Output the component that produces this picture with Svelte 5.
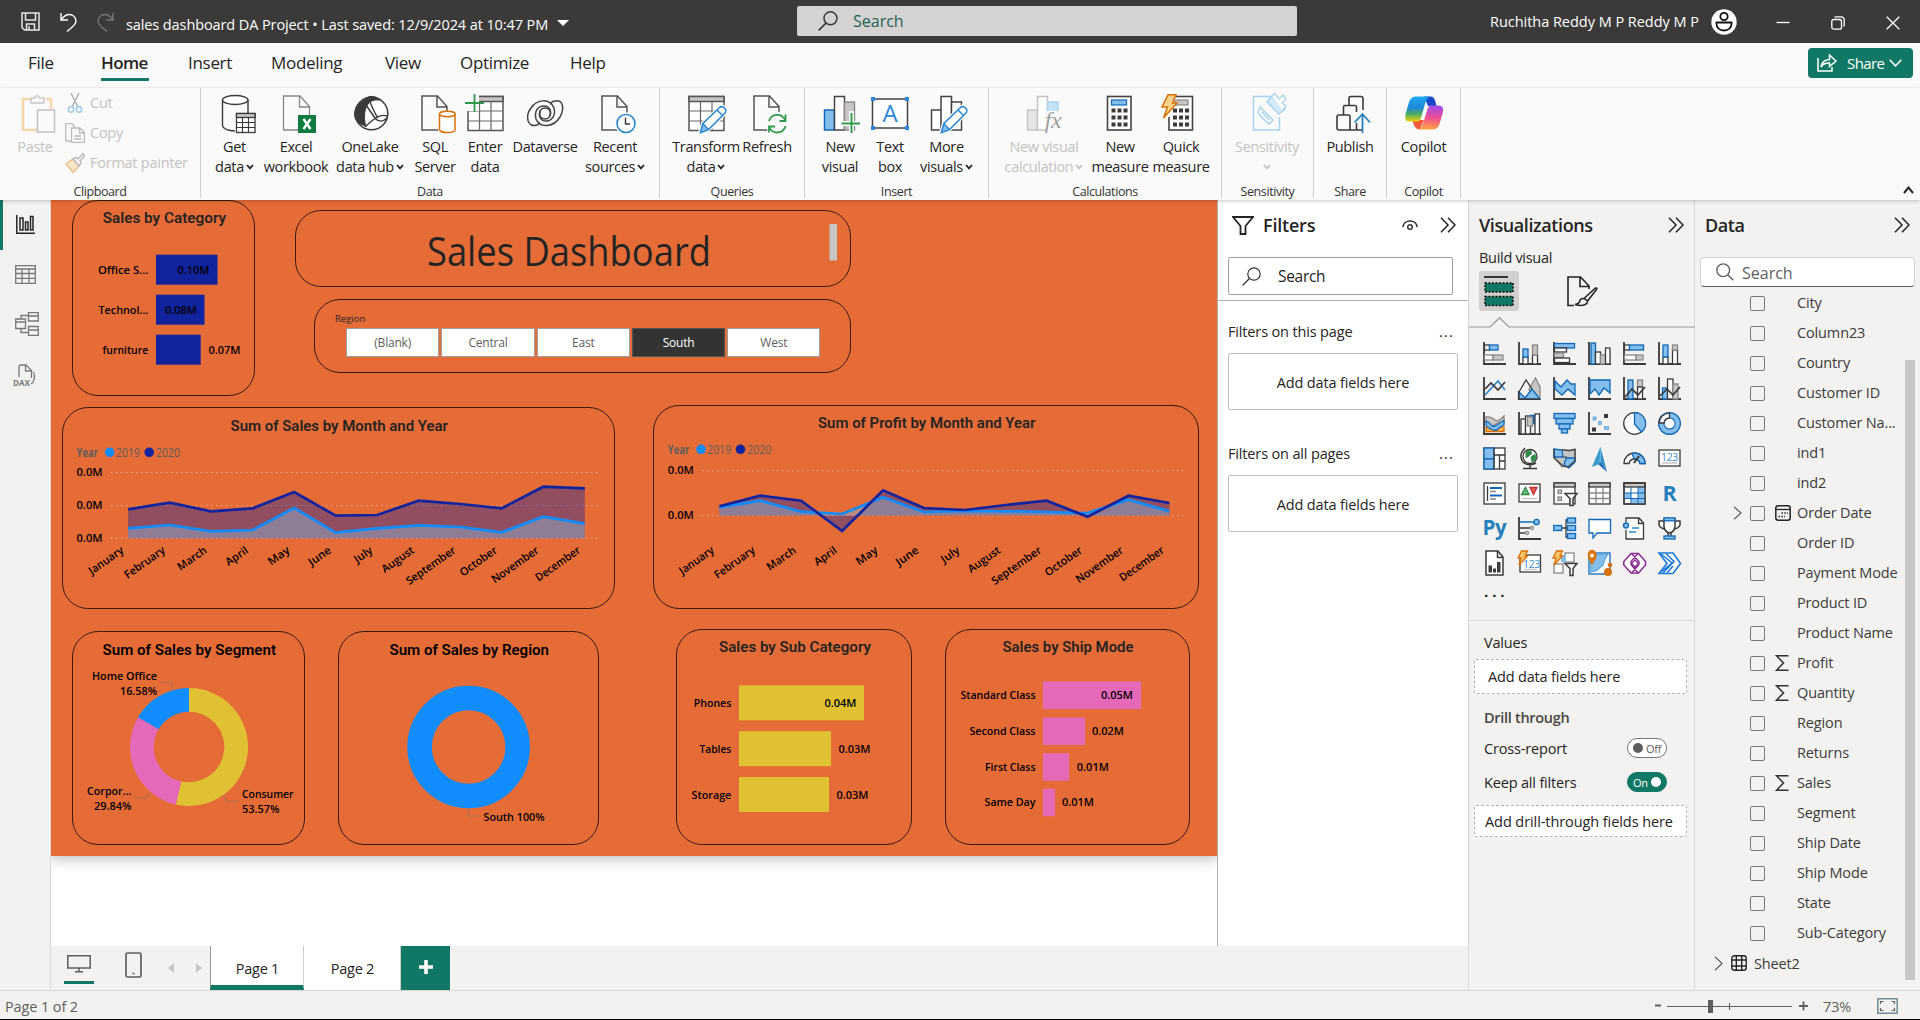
<script>
  const K = '#3b3a39', B = '#1068b8', L = '#83beec', G = '#8a8886', F = '#c8c6c4';
  const r = (x, y, w, h, fill = '#fff', stroke = K, sw = 1.3) =>
    `<rect x="${x}" y="${y}" width="${w}" height="${h}" fill="${fill}" stroke="${stroke}" stroke-width="${sw}"/>`;
  const p = (d, stroke = K, fill = 'none', sw = 1.3) =>
    `<path d="${d}" fill="${fill}" stroke="${stroke}" stroke-width="${sw}"/>`;
  const c = (x, y, rad, stroke = K, fill = 'none', sw = 1.3) =>
    `<circle cx="${x}" cy="${y}" r="${rad}" fill="${fill}" stroke="${stroke}" stroke-width="${sw}"/>`;
  const t = (x, y, s, size, fill, extra = '') =>
    `<text x="${x}" y="${y}" font-size="${size}" fill="${fill}" text-anchor="middle" ${extra}>${s}</text>`;
  const page = p('M7 2H22.500L32 12.500V36H7Z M22 2V13H32', '#555', '#fafafa', 1.5);
  const pencil =
    p('M14 39L17 29.500L33.500 13.500Q36 11.500 38.500 14Q41 16.500 39 19L22.500 35.500Z', '#fafafa', '#fafafa', 4) +
    p('M14.500 38.500L17 29.500L33.500 13.500Q36 11.500 38.500 14Q41 16.500 39 19L22.500 35.500Z M31 16L36.500 21.500', '#2b88d0', '#fff', 1.5) +
    p('M14.500 38.500L17 29.500L22.500 35.500Z', '#2b88d0', '#83beec', 1.3);
  const table = r(3, 2.500, 35, 34, '#fff', '#555', 1.5) + r(3, 2.500, 35, 5, F, '#555', 1.5) + p('M3 17H38M3 27H38M14.500 7.500V36M26 7.500V36', '#666', 'none', 1.2);
  const calc = (x) =>
    r(x, 2.500, 23.500, 33.500, '#fff', '#444', 1.6) +
    [0, 1, 2].map((i) => [0, 1, 2].map((j) => `<rect x="${x + 4 + j * 6}" y="${14.500 + i * 7}" width="4" height="4" fill="#3b3a39"/>`).join('')).join('');
  const bolt = p('M7 0.700H15L11.500 9H16L2.500 24L6.500 13H1Z', '#d8720a', '#fbd38a', 1.5);

  const ic = {
    get: p('M7.500 6V32Q9 36.500 20 37M33 6V19', '#3b3a39', 'none', 1.4) +
      `<ellipse cx="20.200" cy="6" rx="12.800" ry="4.500" fill="#fff" stroke="#3b3a39" stroke-width="1.400"/>` +
      r(21.500, 19.500, 18.500, 19) + r(21.500, 19.500, 18.500, 4, F) + p('M21.500 28.500H40M21.500 33.500H40M27.500 23.500V38M33.500 23.500V38', K, 'none', 1.1),
    excel: p('M7.500 2H24L33.500 12.500V36H7.500Z M23.500 2V13H33.500', '#888', '#fafafa', 1.3) + r(22, 21, 18, 18, '#107c41', '#107c41', 0) +
      p('M27.500 25L34.500 35M34.500 25L27.500 35', '#fff', 'none', 2.4),
    onelake: c(21.500, 19.500, 16.300, '#3b3a39', '#fff', 1.5) +
      p('M12 7.500Q20-2 31 6Q24 5 19.500 8Q12 16 15.500 32Q4 29 4.500 19Q6 11 12 7.500Z', '#3b3a39', '#3b3a39', 1) +
      p('M16 11L25 24M20 8Q25 20 28 24M15 33Q20 28 25 24.500Q31 20 37.500 22M25 24.500Q31 30 37 24', '#3b3a39', 'none', 1.4),
    sql: page + r(23, 19, 18, 18, '#fafafa', '#fafafa', 0) + p('M24.500 20V36Q26 38.500 32.500 38.500Q39 38.500 40 36V20', '#d8720a', '#fff', 1.5) +
      `<ellipse cx="32.300" cy="20" rx="7.800" ry="2.700" fill="#fff" stroke="#d8720a" stroke-width="1.500"/>`,
    enter: table + r(0, 0, 14, 17, '#fafafa', '#fafafa', 0) + p('M9.500 0V18M0 9H19', '#2f9a4b', 'none', 1.8),
    dataverse: p('M12 31C2 34 0 22 6 14C12 5 25 4 29 14C31 21 27 27 21 27C15 27 13 21 15.500 17', '#444', 'none', 1.5) +
      p('M28 7.500C38 4 40 14 35 23C29 33 15 35 11 25C9 17 13 12 19 12C25 12 27 18 24.500 22M12 31C14 30 14.500 29 14 28M28 7.500C26 8.500 25.500 9.500 26 10.500', '#444', 'none', 1.5) + c(20, 19.500, 5.500, '#444', 'none', 1.4),
    recent: page + c(31, 29.500, 10.500, '#fafafa', '#fafafa') + c(31, 29.500, 9, '#2b88c8', '#fff', 1.6) + p('M30.500 23.500V30H35', K, 'none', 1.4),
    transform: table + pencil,
    refresh: page + c(30, 29.500, 11, '#fafafa', '#fafafa') + p('M22 27A8.500 8.500 0 0 1 38 26M38.500 20.500V27H32.500M38.500 32A8.500 8.500 0 0 1 22.500 33.500M22 38.500V32.500H28', '#2f9a4b', 'none', 1.8),
    visual: r(4.500, 16, 10, 20, L, B, 1.5) + r(14.500, 2.500, 10, 33.500, '#fff', '#444', 1.5) + r(24.500, 8, 10, 28, F, G, 1.4) +
      p('M31.500 17V41M19.500 29.500H42', '#fafafa', 'none', 5) + p('M31.500 19V39M21.500 29.500H40', '#2f9a4b', 'none', 1.9),
    textbox: r(2.500, 5, 35, 29, '#fff', '#444', 1.5) +
      [[1, 3], [35, 3], [1, 32], [35, 32]].map(([x, y]) => r(x, y, 4, 4, '#2b88d8', '#2b88d8', 0)).join('') + t(20, 28, 'A', 24, '#2b88d8'),
    more: r(4.500, 16, 10, 20, '#fff', '#444', 1.5) + r(14, 2.500, 10.500, 33.500, '#fff', '#444', 1.5) + r(24.500, 8, 10, 28, '#fff', '#444', 1.5) + pencil,
    viscalc: r(3.500, 16, 10, 20, '#e6e5e4', '#c4c4c4', 1.4) + r(13.500, 2.500, 10, 33.500, '#fff', '#c0c0c0', 1.4) + r(23.500, 8, 10.500, 14, '#c7e3f7', '#a9d2ef', 1.4) +
      r(23, 17, 17, 23, '#fafafa', '#fafafa', 0) + t(29, 34, 'fx', 24, '#a0a0a0', 'font-family="Liberation Serif" font-style="italic"'),
    measure: calc(7.500) + r(11.500, 6, 15, 5, L, B, 1.2),
    quick: calc(8) + r(14, 6, 13, 5, F, G, 1.2) + r(0, 1, 12, 22, '#fafafa', '#fafafa', 0) + bolt,
    sens: p('M24 2.500H6.500V36H32.500V23', '#a8d3ee', 'none', 1.5) + p('M13 13L26 26L22 30Q20 29 11 19Z M14.500 17.500L22.500 26', '#a8d3ee', '#fff', 1.5) +
      p('M20 8L25 2L38 15L32 20Z', '#a8d3ee', '#d6ebf8', 1.5) + p('M25 2L28-.5L32 5L36 1L39 5L35 9L39 12L36 16', '#a8d3ee', '#fff', 1.3),
    publish: p('M20 36V22Q20 21 18.500 21H9Q7 21 7 23V34Q7 36 9 36H32M13.500 21V13Q13.500 11.500 15 11.500H25Q26.500 11.500 26.500 13V18M19 11V4Q19 2.500 20.500 2.500H31Q33 2.500 33 4.500V16M26.500 29V36', '#3b3a39', 'none', 1.6) +
      p('M32.500 39V21M24.500 28.500L32.500 20L40 28.500', '#2580bb', 'none', 1.8),
    copilot: `<defs><linearGradient id="ca" x1="0" y1="0" x2="0" y2="1"><stop offset="0" stop-color="#1fa8f2"/><stop offset=".45" stop-color="#1d86d8"/><stop offset=".7" stop-color="#4cae62"/><stop offset="1" stop-color="#f2d10c"/></linearGradient>
      <linearGradient id="cb" x1=".4" y1="0" x2=".3" y2="1"><stop offset="0" stop-color="#a34be8"/><stop offset=".5" stop-color="#ee5090"/><stop offset="1" stop-color="#ffa63c"/></linearGradient></defs>
      <path d="M20 2.500H27Q30 2.500 31.500 8L32.500 12H24Z" fill="#1a48c9"/><path d="M8 26H20L16 35Q12 36 10 31Z" fill="#ee5a3b"/>
      <path d="M12 2.500H26Q22.500 4 21 10L17 24Q16 27.500 12 27.500H5Q0 27.500 1.500 20L5 8Q7 2.500 12 2.500Z" fill="url(#ca)"/>
      <path d="M28 11.500H35Q40 11.500 39 18L35.500 30Q34 35.500 28 35.500H14Q18 34 19.500 28L23.500 15Q24.500 11.500 28 11.500Z" fill="url(#cb)"/>`,
    paste: p('M14 5H4V36H18M27 5H32V15', '#f5d7ab', 'none', 2.5) + p('M12 9V4H16Q18-1 20.500 4H25V9Z', '#c8c8c8', '#fafafa', 1.5) + r(18.500, 16, 17, 22, '#fafafa', '#c0c0c0', 1.5)
  };

  const groups = [
    { name: 'Data', width: 459, items: [
      ['get', 'Get', 'data', 1, 67], ['excel', 'Excel', 'workbook', 0, 56], ['onelake', 'OneLake', 'data hub', 1, 92], ['sql', 'SQL', 'Server', 0, 38],
      ['enter', 'Enter', 'data', 0, 62], ['dataverse', 'Dataverse', '', 0, 58], ['recent', 'Recent', 'sources', 1, 82]] },
    { name: 'Queries', width: 145, items: [['transform', 'Transform', 'data', 1, 92], ['refresh', 'Refresh', '', 0, 30]] },
    { name: 'Insert', width: 184, items: [['visual', 'New', 'visual', 0, 70], ['textbox', 'Text', 'box', 0, 30], ['more', 'More', 'visuals', 1, 83]] },
    { name: 'Calculations', width: 233, items: [['viscalc', 'New visual', 'calculation', 1, 110, 1], ['measure', 'New', 'measure', 0, 42], ['quick', 'Quick', 'measure', 0, 80]] },
    { name: 'Sensitivity', width: 92, items: [['sens', 'Sensitivity', '', 1, 90, 1]] },
    { name: 'Share', width: 73, items: [['publish', 'Publish', '', 0, 72]] },
    { name: 'Copilot', width: 74, items: [['copilot', 'Copilot', '', 0, 73]] }
  ];

  const axis = p('M1 0V22H23', K, 'none', 1.8);
  const viz = [
    axis + r(1.500, 3, 5, 5) + r(6.500, 3, 8.500, 5, L, B) + r(1.500, 13, 8.500, 5, '#fff', G) + r(10, 13, 10, 5, F, G),
    axis + r(5, 15, 5, 7) + r(5, 7, 5, 8, L, B) + r(14.500, 13, 5, 9) + r(14.500, 3, 5, 10, F, G),
    axis + r(1.500, 1.500, 20, 4.500, L, B) + r(1.500, 6, 12, 4) + r(1.500, 11, 9, 4.500, F, G) + r(1.500, 16, 15, 4.500),
    axis + r(3, 1, 4.500, 21, L, B) + r(7.500, 10, 5, 12) + r(12.500, 13, 5, 9, F, G) + r(17.500, 6, 4.500, 16),
    axis + r(1.500, 3, 5, 5) + r(6.500, 3, 14, 5, L, B) + r(1.500, 13, 11.500, 5, '#fff', G) + r(13, 13, 7, 5, F, G),
    axis + r(5, 15, 5, 7) + r(5, 3, 5, 12, L, B) + r(14.500, 8, 5, 14) + r(14.500, 3, 5, 5, F, G),
    axis + p('M2 18L15 4L22 13', '#2b88c8', 'none', 1.7) + p('M2 12L8 6L15 13L22 5', K, 'none', 1.7),
    p('M11 12L17.500 1L22 10V22H14Z', G, F) + p('M1 15L8 3L14 12L7 22H1Z') + p('M1 15L7 21L14 12L22 22H1Z', B, L) + p('M.7 14V22.300H22', K, 'none', 1.600),
    axis + p('M2 4L8 10L14 3L18 7H22V18L15 12L9 18L2 12Z', B, L),
    axis + p('M2 3H22V16L16 11L11 18L7 12L2 17Z', B, L),
    axis + r(5, 3, 5, 19, L, B) + r(14.500, 3, 5, 7, F, G) + r(14.500, 10, 5, 12) + p('M2 20L9 12L15 18L22 10', K, 'none', 1.7),
    axis + r(4.500, 11, 5, 11, L, B) + r(9.500, 2, 5.500, 20) + r(15, 7, 5, 15, F, G) + p('M2 19L9 12L15 18L22 10', K, 'none', 1.7),
    p('M3 15H21V19.500H3Z', '#d8720a', '#f7b04d') + p('M3 5Q8 4 11.500 7.500T21 4V10Q16 9 12 12.500T3 10Z', G, F) + p('M3 9Q6 10 8 13T14 13T21 8.500V13Q17 14.500 15 17T8 17T3 13Z', B, L) + axis,
    axis + r(3, 7, 4.500, 15) + r(7.500, 4, 5, 18) + r(12, 3, 5, 9, '#1068b8', B, .5) + r(9.500, 5, 5, 9, F, G) + r(17, 2, 4.500, 20),
    r(1, 1.500, 21, 5, L, B) + r(3, 6.500, 17, 5.500, L, B) + r(6, 12, 11, 5, L, B) + r(8.500, 17, 6, 4, L, B),
    axis + r(5, 5, 3, 3, L, '#5fa8dc', .8) + r(16, 2, 4, 4, K, K, 0) + r(10.500, 9.500, 3, 3, L, '#5fa8dc', .8) + r(4, 15.500, 4, 4, K, K, 0) + r(16.500, 14.500, 4, 3, L, '#5fa8dc', .8),
    c(11.500, 11.500, 10.800, K, '#fff') + p('M11.500 .7A10.800 10.800 0 0 1 18.500 20L11.500 12Z', B, L),
    c(11.500, 11.500, 8.500, L, 'none', 5) + c(11.500, 11.500, 10.900, B, 'none', 1.2) + c(11.500, 11.500, 5.600, B, '#fff', 1.2) + p('M1 11Q2 2 11.500 .8V6Q6.500 6.500 6 11Z', K, '#fff'),
    r(1, 1, 21, 21) + r(1, 1, 10, 11, L, B) + r(1, 12, 10, 10, L, B) + p('M11 8H22M11 1V22M16.500 8V22M16.500 14H22'),
    c(12, 9.500, 7, K, '#fff') + p('M8 5L12 3L14 6L11 9L8 11ZM13 10L17 7L18 12L14 15Z', '#2f8a48', '#2f8a48', .8) + p('M7 1Q0 8 5 15Q10 20 18 16M12 18V21M5 21.500H19', K, 'none', 1.500),
    p('M1 3H22V13L17 18H13L9 20L1 10Z', G, F) + p('M1 2L9 3L10 10H1Z', B, L) + p('M13 11H22V15L16 21L11 18Z', B, L) + p('M1 2V11L10 19L15 20L22 14V2L16 4L9 2.500M10 10H14', K, 'none', 1.2),
    `<path d="M12.500 0L4 20L13 15Z" fill="#5fb6dd"/><path d="M12.500 0L19 25L13 15Z" fill="#2f8fc6"/><path d="M12.500 0L4 20L11 17Z" fill="#3a9ccb"/><path d="M13 15L19 25L10 17Z" fill="#1a69ad"/>`,
    p('M1 16.500A10.500 10.500 0 0 1 22 16.500H17Q16 12 11.500 12T6 16.500Z', K, '#fff') + p('M9 6.500A10.500 10.500 0 0 1 22 16.500H17Q16 12 11 11.500Z', B, L) + p('M16 9L11 16', K, K, 2),
    r(1, 3, 21, 16) + t(11.500, 13.500, '123', 10.500, '#3a8fd0') + p('M4 16H19', F, 'none', 1.5),
    r(1, 1, 21, 21) + p('M4.500 4V19', K) + p('M7 6H19M7 13.500H19', B, 'none', 1.8) + p('M7 9.500H13M7 17H13', G),
    r(1, 2, 21, 18) + p('M3.500 12.500L7.500 5.500L11 12.500Z', '#2f8a48', '#6cc27f') + p('M12 5.500H19L15.500 12.500Z', '#c4312f', '#e8605c') + p('M4 16.500H19', F, 'none', 1.5),
    r(1, 1, 21, 21) + r(1, 1, 21, 4, F, K) + r(5, 8, 3.500, 3.500, F, G) + r(5, 15, 3.500, 3.500, F, G) + p('M12 11.500H24L20 16.500V23.500H17V16.500Z', K, '#fff', 1.5),
    r(1, 1, 21, 21) + r(1, 1, 21, 4, F, K) + p('M1 11H22M1 16.500H22M8 5V22M15 5V22', G),
    r(1, 1, 21, 21) + r(15, 5, 7, 17, L, B, 0) + r(8, 16, 14, 6, L, B, 0) + r(1, 11, 7, 5.500, L, B, 0) + r(1, 1, 21, 4, F, K) + p('M1 11H22M1 16.500H22M8 5V22M15 5V22', B, 'none', 1) + p('M1 1H22V22H1Z'),
    t(11.500, 19, 'R', 21.500, '#2580bb', 'font-weight="700"'),
    t(11.500, 18, 'Py', 20.500, '#2580bb', 'font-weight="700"'),
    axis + p('M2 5H17', '#2b88c8', 'none', 1.8) + c(18.500, 5, 2.700, B, L) + p('M2 11H12M2 16H7', K) + c(14, 11, 1.500, G, '#fff') + c(9, 16, 1.500, G, '#fff'),
    p('M8 11H14M18 3H13V20H18', K) + r(.7, 8.500, 8, 5, L, B) + r(14.500, 1, 8, 5, L, B) + r(14.500, 8.500, 8, 5, L, B) + r(14.500, 16.500, 8, 5, L, B),
    p('M1 2.500H22.500V16H9L5 21V16H1Z', B, '#fff'),
    p('M3 5V1H16L20.500 6V22H3V13M15.500 1V6.500H20.500', K, '#fff') + c(3, 8.500, 2.500, B, L) + p('M9 11H16M6 15H13', '#2b88c8', 'none', 1.3),
    p('M6 2H17V10Q16 15 11.500 16Q7 15 6 10Z M6 4H1V8Q2 11 6.500 12M17 4H22V8Q21 11 16.500 12M10 16V19M13 16V19', K, '#fff', 1.500) + r(6, .8, 11, 3, L, B) + r(6, 19, 11, 3, L, B),
    p('M3 -1H15L20 5V23H3Z M14.500 -1V5.500H20', K, '#fff', 1.5) + r(5.500, 13.500, 3.500, 7, K, K, 0) + r(10, 16.500, 3, 4, K, K, 0) + r(14, 10, 3.500, 10.500, K, K, 0),
    r(2, 3, 20.500, 17) + t(13.500, 15.500, '123', 10.500, '#3a8fd0') + p('M6 17.500H19', F) + p('M3.500 -1H9.500L7 4H9.500L1 13L3 6H0Z', '#d8720a', '#fbc36a'),
    r(12, 1, 9, 9, '#fff', G) + r(1, 12, 9, 9, '#fff', G) + r(8, 3, 5, 7, L, L, 0) + p('M12 11.500H24L20 16.500V23.500H17V16.500Z', K, '#fff', 1.5) + p('M3.500 -1H9.500L7 4H9.500L1 13L3 6H0Z', '#d8720a', '#fbc36a'),
    r(1, 1, 21, 21, '#fff', B) + p('M2 10L10 2H20L17 7L15 13L8 19L2 20Z', '#5fa8dc', L) + p('M4 12L1 6Q-1 -1 4 -1.500Q9 -1 7.500 6Z', '#d8720a', '#e07a10') + c(4, 3.500, 1.200, '#fff', '#fff') + c(20, 20, 3.300, '#d8720a', '#d8720a') + c(22, 13, 1.700, '#d8720a', '#d8720a'),
    p('M8 1.500H15.500L22.500 9.500V13L15.500 21H8L.8 13V9.500Z', '#8a2f94', '#fff', 1.6) + p('M8.500 1.500L16 9.500V12.500L8.500 21M15 1.500L8 9.500V12.500L15 21M8.500 11.500L12 8L15.500 11.500L12 15Z', '#8a2f94', 'none', 1.4),
    p('M1 1H15L22.500 11.500L15 21.500H1L9 11.500Z', '#1a78d8', '#fff', 1.6) + p('M3 2L14 11L3 20M8 1.500L16 9.500L5 21M15 14L9 21', '#1a78d8', 'none', 1.500)
  ];

  const fields = [['City'], ['Column23'], ['Country'], ['Customer ID'], ['Customer Na...'], ['ind1'], ['ind2'], ['Order Date', 'date'], ['Order ID'], ['Payment Mode'], ['Product ID'],
    ['Product Name'], ['Profit', 'sum'], ['Quantity', 'sum'], ['Region'], ['Returns'], ['Sales', 'sum'], ['Segment'], ['Ship Date'], ['Ship Mode'], ['State'], ['Sub-Category']];
  const regions = ['(Blank)', 'Central', 'East', 'South', 'West'];
  const months = ['January', 'February', 'March', 'April', 'May', 'June', 'July', 'August', 'September', 'October', 'November', 'December'];
  const monthLen = [40, 47, 33, 25, 24, 25, 20, 37, 58, 43, 55, 52];

  const trends = [
    { title: 'Sum of Sales by Month and Year', box: '62 407 553 202', tx: 230.500, ty: 431.300, lx: 76.500, ly: 456.500, grid: [472.500, 505.500, 538.300], g0: 111, g1: 601, base: 538.300, x0: 128.100, dx: 41.520, mx: 123.500,
      a: [509.300, 502.700, 511.300, 508.300, 492, 515.700, 515, 500.700, 504, 508.300, 486.700, 488.300],
      b: [528.300, 525, 531.300, 530, 508, 532.700, 528.300, 525.300, 527, 532.300, 516.700, 523.700] },
    { title: 'Sum of Profit by Month and Year', box: '653 405 546 204', tx: 818, ty: 428.300, lx: 667.800, ly: 453.500, grid: [470.700, 515.600], g0: 702, g1: 1183, base: 515.600, x0: 719.400, dx: 40.910, mx: 714,
      a: [506.300, 495.700, 500.700, 531, 490.300, 508, 510, 505, 500.700, 516.700, 495.700, 503],
      b: [507.300, 500.700, 511.700, 514, 497.300, 512, 511, 511.300, 512, 513, 499.700, 511.300] }
  ];
  const line = (ch, ys) => ys.map((y, i) => `${(ch.x0 + ch.dx * i).toFixed(1)},${y}`).join(' ');
  const area = (ch, ys) => `${ch.x0},${ch.base} ${line(ch, ys)} ${ch.x0 + ch.dx * 11},${ch.base}`;

  // [label, label start, baseline, bar top, bar width, value, value start]
  const category = [['Office S...', 98, 274.300, 254.700, 61.500, '0.10M', 177.500], ['Technol...', 98.500, 314.300, 294.700, 48.500, '0.08M', 165], ['furniture', 102.500, 354.300, 334.700, 44.700, '0.07M', 208.500]];
  const sub = [['Phones', 693.800, 707, 685.300, 125, '0.04M', 824.500], ['Tables', 699.500, 752.500, 731.200, 92, '0.03M', 838.500], ['Storage', 691.500, 798.500, 777, 90, '0.03M', 836.500]];
  const ship = [['Standard Class', 960.500, 699, 681.500, 98, '0.05M', 1101], ['Second Class', 969.500, 735, 717.500, 42, '0.02M', 1092], ['First Class', 985, 771, 753.200, 26, '0.01M', 1076.800], ['Same Day', 984.500, 806, 788.700, 12, '0.01M', 1062]];

  function arc(cx, cy, R, q, a0, a1) {
    const pt = (rad, a) => `${(cx + rad * Math.sin((a * Math.PI) / 180)).toFixed(2)} ${(cy - rad * Math.cos((a * Math.PI) / 180)).toFixed(2)}`;
    const big = a1 - a0 > 180 ? 1 : 0;
    return `M${pt(R, a0)}A${R} ${R} 0 ${big} 1 ${pt(R, a1)}L${pt(q, a1)}A${q} ${q} 0 ${big} 0 ${pt(q, a0)}Z`;
  }
</script>

{#snippet svg(body, w, h, box)}
  <svg width={w} height={h} viewBox={box} overflow="visible">{@html body}</svg>
{/snippet}
{#snippet label(x, y, len, s, cls)}
  <text {x} {y} textLength={len} lengthAdjust="spacingAndGlyphs" class={cls}>{s}</text>
{/snippet}
{#snippet chevrons()}
  <svg width="16" height="16" viewBox="0 0 16 16"><path d="M1 .7L8 8L1 15.300M8 .7L15 8L8 15.300" fill="none" stroke="#252423" stroke-width="1.500" /></svg>
{/snippet}
{#snippet caret()}
  <svg class="caret" width="8" height="6" viewBox="0 0 8 6"><path d="M1 1L4 4.300L7 1" fill="none" stroke="currentColor" stroke-width="1.800" /></svg>
{/snippet}
{#snippet bars(rows, x, end, h, color)}
  {#each rows as b}
    <rect {x} y={b[3]} width={b[4]} height={h} fill={color} />
    {@render label(b[1], b[2], end - b[1], b[0], 'dl')}
    {@render label(b[6], b[2], 32, b[5], 'dl')}
  {/each}
{/snippet}

<div class="app">
  <header class="titlebar">
    <div class="quick">
      <svg width="19" height="19" viewBox="0 0 19 19"><path d="M1 1H18V18H3.500L1 15.500ZM4.500 1V8H14.500V1M5.500 18V12H13.500V18M8 14V18" fill="none" stroke="#e8e6e4" stroke-width="1.500" /></svg>
      <svg width="17" height="20" viewBox="0 0 17 20"><path d="M1 1V8H8M1.500 7.500Q6 1 12 3Q17 6 15.500 11Q14 14 7 19.500" fill="none" stroke="#fff" stroke-width="1.400" /></svg>
      <svg width="17" height="20" viewBox="0 0 17 20"><path d="M16 1V8H9M15.500 7.500Q11 1 5 3Q0 6 1.500 11Q3 14 10 19.500" fill="none" stroke="#777" stroke-width="1.400" /></svg>
    </div>
    <span class="doc">sales dashboard DA Project&nbsp;• Last saved: 12/9/2024 at 10:47 PM</span>
    <svg class="down" width="12" height="6" viewBox="0 0 12 6"><path d="M0 0H12L6 6Z" fill="#fff" /></svg>
    <div class="topsearch">
      <svg width="20" height="20" viewBox="0 0 20 20"><circle cx="12.500" cy="7.300" r="6.500" fill="none" stroke="#3b3a39" stroke-width="1.500" /><path d="M8 12L.7 19.300" stroke="#3b3a39" stroke-width="1.700" /></svg>
      <span>Search</span>
    </div>
    <span class="user">Ruchitha Reddy M P Reddy M P</span>
    <svg class="avatar" width="26" height="26" viewBox="0 0 26 26"><circle cx="13" cy="13" r="12.700" fill="#fff" /><circle cx="13" cy="7.500" r="3.700" fill="none" stroke="#111" stroke-width="1.800" /><path d="M5.500 13.500H20.500V15Q20 21.500 13 21.500Q6 21.500 5.500 15Z" fill="none" stroke="#111" stroke-width="1.800" /></svg>
    <div class="win">
      <svg width="14" height="14" viewBox="0 0 14 14"><path d="M.5 6.500H13.500" stroke="#fff" stroke-width="1.300" /></svg>
      <svg width="14" height="14" viewBox="0 0 14 14"><rect x=".8" y="3.500" width="9.700" height="9.700" rx="2" fill="none" stroke="#fff" stroke-width="1.300" /><path d="M3.500 1.200Q4 .8 5 .8H10Q13.200 .8 13.200 4V9Q13.200 10 12.500 10.500" fill="none" stroke="#fff" stroke-width="1.300" /></svg>
      <svg width="14" height="14" viewBox="0 0 14 14"><path d="M.7 .7L13.300 13.300M13.300 .7L.7 13.300" stroke="#fff" stroke-width="1.300" /></svg>
    </div>
  </header>

  <nav class="tabs">
    <span class="tab file">File</span><span class="tab home">Home</span><span class="tab insert">Insert</span><span class="tab modeling">Modeling</span>
    <span class="tab view">View</span><span class="tab optimize">Optimize</span><span class="tab help">Help</span>
    <button class="share">
      <svg width="20" height="18" viewBox="0 0 20 18"><path d="M1 4V17H15V13M4 13Q5 6 12.500 5.500V1L19 7L12.500 12.500V9Q7 8.500 4 13Z" fill="none" stroke="#fff" stroke-width="1.500" /></svg>
      <span>Share</span>
      <svg width="13" height="8" viewBox="0 0 13 8"><path d="M.7 .8L6.500 6.800L12.300 .8" fill="none" stroke="#fff" stroke-width="1.500" /></svg>
    </button>
  </nav>

  <section class="ribbon">
    <div class="group clip">
      <div class="cliprow">
        <div class="item off paste">{@render svg(ic.paste, 38, 40, '0 0 38 40')}<span>Paste</span></div>
        <div class="clipcol">
          <div><svg width="20" height="20" viewBox="0 0 20 20"><path d="M6 0L13 14M14 0L7 14" stroke="#aaa" stroke-width="1.300" /><circle cx="6" cy="16.500" r="2.700" fill="none" stroke="#9fcbe8" stroke-width="1.500" /><circle cx="14" cy="16.500" r="2.700" fill="none" stroke="#9fcbe8" stroke-width="1.500" /></svg>Cut</div>
          <div><svg width="20" height="20" viewBox="0 0 20 20"><path d="M6 18H.7V.7H7L10 4M6.500 5H15L19.300 9.500V19.300H6.500ZM14.500 5V10H19M9.500 13H16M9.500 16H16" fill="none" stroke="#bbb" stroke-width="1.300" /></svg>Copy</div>
          <div><svg width="20" height="20" viewBox="0 0 20 20"><path d="M1 11L8 6L14 13L8 19.500Z" fill="#fbe6c8" stroke="#ecc48e" stroke-width="1.500" /><path d="M8 6L11 4.500L13 6L18 .7L19.500 3L15 8L16 10L14 13Z" fill="#fafafa" stroke="#bbb" stroke-width="1.500" /></svg>Format painter</div>
        </div>
      </div>
      <span class="gname">Clipboard</span>
    </div>
    {#each groups as g}
      <div class="group" style:width="{g.width}px">
        <div class="items">
          {#each g.items as it}
            <div class="item" class:off={it[5]} style:width="{it[4]}px">
              {@render svg(ic[it[0]], 40, 40, '0 0 40 40')}
              <span>{it[1]}</span>
              <span class="second">{it[2]}{#if it[3]}{@render caret()}{/if}</span>
            </div>
          {/each}
        </div>
        <span class="gname">{g.name}</span>
      </div>
    {/each}
    <svg class="collapse" width="11" height="8" viewBox="0 0 11 8"><path d="M1 7L5.500 1.500L10 7" fill="none" stroke="#252423" stroke-width="2" /></svg>
  </section>

  <main class="body">
    <aside class="rail">
      <div class="railitem active"><svg width="19" height="19" viewBox="0 0 19 19"><path d="M.8 0V18.200H19M4 3H7V15H4ZM9.500 7H12V15H9.500ZM14.500 1.500H17V15H14.500Z" fill="none" stroke="#252423" stroke-width="1.500" /></svg></div>
      <div class="railitem"><svg width="21" height="19" viewBox="0 0 21 19"><path d="M.7 .7H20.300V18.300H.7ZM.7 4H20.300M.7 8.500H20.300M.7 13.300H20.300M7 4V18.300M14 4V18.300" fill="none" stroke="#7a7876" stroke-width="1.300" /></svg></div>
      <div class="railitem"><svg width="24" height="24" viewBox="0 0 24 24"><path d="M.7 7H10.500V16.500H.7ZM.7 10H10.500M13.500 .7H23.300V9H13.500ZM13.500 4H23.300M13.500 14.500H23.300V23.300H13.500ZM13.500 18H23.300M6 7V3.500H13.500M6 16.500V20.500H13.500" fill="none" stroke="#7a7876" stroke-width="1.300" /></svg></div>
      <div class="railitem"><svg class="dax" width="23" height="26" viewBox="0 0 23 26"><path d="M6 13V3Q6 1 8 1H13L18.500 6.500V14M12.500 1V7H18.500M20 8Q21.500 9 21.500 12Q21.500 18 18 20" fill="none" stroke="#7a7876" stroke-width="1.300" /><text x="0" y="21.500" font-size="9.500" textLength="17" lengthAdjust="spacingAndGlyphs" font-weight="700" fill="#7a7876">DAX</text></svg></div>
    </aside>

    <div class="work">
      <div class="upper">
        <div class="viewport">
          <div class="report">
            <div class="r1">
              <div class="card cat">
                <svg viewBox="72 200 182 196">
                  {@render label(102.700, 223.300, 123.500, 'Sales by Category', 'vt')}
                  {@render bars(category, 156, 148.300, 30, '#12239e')}
                </svg>
              </div>
              <div class="r1r">
                <div class="card head">
                  <svg viewBox="295 210 556 77">
                    {@render label(427, 266, 284, 'Sales Dashboard', 'big')}
                    <rect x="829.500" y="224" width="7.500" height="36.500" fill="#c8c6c4" />
                  </svg>
                </div>
                <div class="card slicer">
                  <span class="sname">Region</span>
                  <div class="chips">{#each regions as g}<span class="chip" class:on={g === 'South'}>{g}</span>{/each}</div>
                </div>
              </div>
            </div>
            <div class="r2">
              {#each trends as ch, k}
                <div class="card {k ? 'profit' : 'sales'}">
                  <svg viewBox={ch.box}>
                    {@render label(ch.tx, ch.ty, 217.500, ch.title, 'vt')}
                    {@render label(ch.lx, ch.ly, 21.500, 'Year', 'lg b')}
                    <circle cx={ch.lx + 33.200} cy={ch.ly - 4.200} r="4.800" fill="#118dff" />
                    {@render label(ch.lx + 39.500, ch.ly, 24, '2019', 'lg')}
                    <circle cx={ch.lx + 72.700} cy={ch.ly - 4.200} r="4.800" fill="#12239e" />
                    {@render label(ch.lx + 79.500, ch.ly, 24, '2020', 'lg')}
                    {#each ch.grid as y}
                      <line x1={ch.g0} x2={ch.g1} y1={y} y2={y} stroke="#efa98a" stroke-width="1" stroke-dasharray="1.500 3.500" />
                      {@render label(ch.lx, y + 3.300, 26, '0.0M', 'dl')}
                    {/each}
                    <polygon points={area(ch, ch.a)} fill="#12239e" fill-opacity=".4" />
                    <polygon points={area(ch, ch.b)} fill="#8eabcb" fill-opacity=".5" />
                    <polyline points={line(ch, ch.b)} fill="none" stroke="#118dff" stroke-width="2.700" />
                    <polyline points={line(ch, ch.a)} fill="none" stroke="#12239e" stroke-width="2.700" />
                    {#each months as m, i}
                      <text x="0" y="0" text-anchor="end" textLength={monthLen[i]} lengthAdjust="spacingAndGlyphs" class="mo" transform="translate({ch.mx + ch.dx * i + 1} 552) rotate(-35)">{m}</text>
                    {/each}
                  </svg>
                </div>
              {/each}
            </div>
            <div class="r3">
              <div class="card seg">
                <svg viewBox="72 631 233 214">
                  {@render label(102.500, 655.300, 173.500, 'Sum of Sales by Segment', 'vt k')}
                  <path d={arc(189, 747, 59, 35.300, 0, 192.850)} fill="#dfc133" />
                  <path d={arc(189, 747, 59, 35.300, 192.850, 300.300)} fill="#e669b9" />
                  <path d={arc(189, 747, 59, 35.300, 300.300, 360)} fill="#118dff" />
                  <path class="lead" d="M161 682.500H171.500L173.500 689M135 798H146L150.500 792.500M223 795L227 801H238" />
                  {@render label(92, 680, 65, 'Home Office', 'dl')}
                  {@render label(120, 695, 37, '16.58%', 'dl')}
                  {@render label(87, 795, 44.500, 'Corpor...', 'dl')}
                  {@render label(94, 810, 37.500, '29.84%', 'dl')}
                  {@render label(242, 798, 51.500, 'Consumer', 'dl')}
                  {@render label(242, 813, 37.500, '53.57%', 'dl')}
                </svg>
              </div>
              <div class="card reg">
                <svg viewBox="338 631 261 214">
                  {@render label(389.500, 655.300, 159.500, 'Sum of Sales by Region', 'vt k')}
                  <circle cx="468.600" cy="747" r="49" fill="none" stroke="#118dff" stroke-width="24.600" />
                  <path class="lead" d="M468.600 809V816H480" />
                  {@render label(483.500, 821, 61, 'South 100%', 'dl')}
                </svg>
              </div>
              <div class="card sub">
                <svg viewBox="676 629 236 216">
                  {@render label(719, 652.300, 152, 'Sales by Sub Category', 'vt')}
                  {@render bars(sub, 739, 731.300, 35, '#dfc133')}
                </svg>
              </div>
              <div class="card ship">
                <svg viewBox="945 629 245 216">
                  {@render label(1002.500, 652.300, 131, 'Sales by Ship Mode', 'vt')}
                  {@render bars(ship, 1043, 1035.500, 27.500, '#e669b9')}
                </svg>
              </div>
            </div>
          </div>
        </div>

        <aside class="filters">
          <div class="fhead">
            <svg width="22" height="19" viewBox="0 0 22 19"><path d="M1 1H21L13.500 10V18H8.500V10Z" fill="none" stroke="#252423" stroke-width="1.800" /></svg>
            <b>Filters</b>
            <svg class="eye" width="16" height="11" viewBox="0 0 16 11"><path d="M.8 7Q2 1 8 1T15.200 7" fill="none" stroke="#333" stroke-width="1.500" /><circle cx="8" cy="7" r="2.300" fill="none" stroke="#333" stroke-width="1.500" /></svg>
            {@render chevrons()}
          </div>
          <div class="fsearch">
            <svg width="19" height="19" viewBox="0 0 19 19"><circle cx="12" cy="7" r="6.200" fill="none" stroke="#333" stroke-width="1.200" /><path d="M7.500 11.500L.7 18.300" stroke="#333" stroke-width="1.300" /></svg>
            <span>Search</span>
          </div>
          <div class="fsec"><span>Filters on this page</span><span class="dots">...</span></div>
          <div class="fbox">Add data fields here</div>
          <div class="fsec second2"><span>Filters on all pages</span><span class="dots">...</span></div>
          <div class="fbox">Add data fields here</div>
        </aside>
      </div>

      <div class="pages">
        <div class="mode on"><svg width="24" height="18" viewBox="0 0 24 18"><path d="M.8 .8H23.200V13H.8ZM12 13V16.500M8 16.800H16" fill="none" stroke="#605e5c" stroke-width="1.500" /></svg></div>
        <div class="mode phone"><svg width="17" height="26" viewBox="0 0 17 26"><rect x="1" y="1" width="15" height="24" rx="1.500" fill="none" stroke="#605e5c" stroke-width="1.700" /><path d="M7.500 21.500H9.500" stroke="#605e5c" stroke-width="1.500" /></svg></div>
        <svg class="arr" width="6" height="10" viewBox="0 0 6 10"><path d="M6 0V10L0 5Z" fill="#c8c6c4" /></svg>
        <svg class="arr2" width="6" height="10" viewBox="0 0 6 10"><path d="M0 0V10L6 5Z" fill="#c8c6c4" /></svg>
        <div class="ptab cur">Page 1</div>
        <div class="ptab">Page 2</div>
        <div class="plus"><svg width="14" height="14" viewBox="0 0 14 14"><path d="M7 0V14M0 7H14" stroke="#fff" stroke-width="3.600" /></svg></div>
      </div>
    </div>

    <aside class="vizpane">
      <div class="phead"><b>Visualizations</b>{@render chevrons()}</div>
      <div class="bv">Build visual</div>
      <div class="modes">
        <div class="build"><svg width="30" height="31" viewBox="0 0 30 31"><path d="M0 1H24" stroke="#252423" stroke-width="1.800" /><rect x="1" y="7" width="28" height="9" fill="#117865" stroke="#111" stroke-width="1.500" stroke-dasharray="2 1.500" /><rect x="1" y="20.500" width="28" height="9" fill="#117865" stroke="#111" stroke-width="1.500" stroke-dasharray="2 1.500" /></svg></div>
        <svg class="fmt" width="31" height="31" viewBox="0 0 31 31"><path d="M7 29.500H1V1H13.500L22 10V13M13 1V10.500H22" fill="none" stroke="#252423" stroke-width="1.600" /><path d="M28.500 12Q30.500 11.500 29.500 13.500L20.500 25Q18 22.500 17 22.500ZM17 22.500Q13 22 12.500 26Q11 28.500 8 28.500Q17 31 20 27Q20.500 26 20.500 25Z" fill="#f3f2f1" stroke="#252423" stroke-width="1.500" /></svg>
      </div>
      <svg class="notch" width="226" height="11" viewBox="0 0 226 11"><path d="M0 10H21L30.500 .8L40 10H226" fill="none" stroke="#979593" stroke-width="1.200" /></svg>
      <div class="vgrid">{#each viz as v}{@render svg(v, 23, 23, '0 0 23 23')}{/each}</div>
      <div class="vdots">. . .</div>
      <div class="wells">
        <div class="lab values">Values</div>
        <div class="well">Add data fields here</div>
        <div class="lab drill">Drill through</div>
        <div class="trow"><span>Cross-report</span><span class="tog"><i></i>Off</span></div>
        <div class="trow keep"><span>Keep all filters</span><span class="tog on">On<i></i></span></div>
        <div class="well two">Add drill-through fields here</div>
      </div>
    </aside>

    <aside class="data">
      <div class="phead"><b>Data</b>{@render chevrons()}</div>
      <div class="dsearch">
        <svg width="18" height="18" viewBox="0 0 18 18"><circle cx="7.200" cy="7.200" r="6.400" fill="none" stroke="#605e5c" stroke-width="1.300" /><path d="M12 12L17.300 17.300" stroke="#605e5c" stroke-width="1.400" /></svg>
        <span>Search</span>
      </div>
      <div class="dlist">
        <div class="dfields">
          {#each fields as f}
            <div class="field">
              <span class="exp">{#if f[1] === 'date'}<svg width="9" height="14" viewBox="0 0 9 14"><path d="M1 .8L8 7L1 13.200" fill="none" stroke="#605e5c" stroke-width="1.200" /></svg>{/if}</span>
              <span class="box"></span>
              <span class="kind">
                {#if f[1] === 'sum'}<svg width="14" height="16" viewBox="0 0 14 16"><path d="M13.500 .8H1.500L8.500 8L1.500 15.200H13.500" fill="none" stroke="#333" stroke-width="1.500" /></svg>
                {:else if f[1] === 'date'}<svg width="16" height="16" viewBox="0 0 16 16"><rect x=".8" y=".8" width="14.400" height="14.400" rx="2.500" fill="none" stroke="#252423" stroke-width="1.500" /><path d="M1 4.500H15" stroke="#252423" stroke-width="1.300" /><path d="M6.500 8H13M3.500 11.500H10" stroke="#252423" stroke-width="1.500" stroke-dasharray="1.500 1.300" /></svg>{/if}
              </span>
              <span class="fname">{f[0]}</span>
            </div>
          {/each}
          <div class="field sheet">
            <svg width="9" height="15" viewBox="0 0 9 15"><path d="M1 .8L8 7.500L1 14.200" fill="none" stroke="#605e5c" stroke-width="1.200" /></svg>
            <svg width="16" height="16" viewBox="0 0 16 16"><rect x=".8" y=".8" width="14.400" height="14.400" rx="2.500" fill="none" stroke="#252423" stroke-width="1.400" /><path d="M1 5H15M1 11H15M5.300 1V15M10.700 1V15" stroke="#252423" stroke-width="1.400" /></svg>
            <span>Sheet2</span>
          </div>
        </div>
        <div class="scroll"></div>
      </div>
    </aside>
  </main>

  <footer class="status">
    <span>Page 1 of 2</span>
    <div class="zoom">
      <svg width="154" height="16" viewBox="0 0 154 16"><path d="M0 7.500H6M144 8H153M148.500 3.500V12.500" stroke="#605e5c" stroke-width="1.800" /><path d="M12 8.500H137M74.500 5V12" stroke="#605e5c" stroke-width="1" /><rect x="53" y="2" width="5" height="13" fill="#605e5c" /></svg>
      <span>73%</span>
      <svg width="21" height="16" viewBox="0 0 21 16"><rect x=".8" y=".8" width="19.400" height="14.400" fill="none" stroke="#5b7f86" stroke-width="1.300" /><path d="M3.500 6V3.500H6.500M14.500 3.500H17.500V6M17.500 10V12.500H14.500M6.500 12.500H3.500V10" fill="none" stroke="#605e5c" stroke-width="1.200" /></svg>
    </div>
  </footer>
</div>

<style>
  :global(body) { margin: 0; }
  .app { width: 1920px; height: 1020px; overflow: hidden; display: flex; flex-direction: column; font-family: 'Open Sans', 'Noto Sans', sans-serif; color: #252423; background: #f3f2f1; white-space: nowrap; letter-spacing: -0.3px; font-size: 15px; }
  .app * { box-sizing: border-box; }
  svg { flex: none; display: block; }
  span { flex: none; }

  .titlebar { height: 43px; flex: none; background: #3b3a39; color: #fff; display: flex; align-items: center; font-size: 14.5px; }
  .quick { display: flex; gap: 20px; padding-left: 21px; width: 126px; align-items: center; }
  .doc { width: 423px; padding-top: 6px; letter-spacing: -0.1px; }
  .down { margin: 2px 0 0 8px; }
  .topsearch { margin-left: 228px; width: 500px; height: 30px; background: #d4d3d1; border-radius: 2px; display: flex; align-items: center; padding-left: 21px; gap: 15px; color: #1c6253; font-size: 16px; letter-spacing: 0; margin-top: -1px; }
  .user { margin-left: 193px; width: 208px; letter-spacing: -0.03px; }
  .avatar { margin-left: 13px; }
  .win { margin-left: 39px; display: flex; gap: 41px; padding-top: 3px; }

  .tabs { height: 45px; flex: none; background: #fafafa; display: flex; font-size: 17px; align-items: flex-start; letter-spacing: -0.3px; padding-left: 28px; }
  .tab { height: 38px; line-height: 39px; }
  .file { width: 73px; }
  .home { width: 48px; font-weight: 600; border-bottom: 3px solid #117865; margin-right: 39px; letter-spacing: -0.6px; }
  .insert { width: 83px; }
  .modeling { width: 114px; }
  .view { width: 75px; }
  .optimize { width: 110px; }
  .share { margin: 5px 7px 0 auto; width: 105px; height: 30px; background: #117865; border: 0; border-radius: 4px; color: #fff; font: inherit; font-size: 15px; letter-spacing: -0.6px; display: flex; align-items: center; padding: 0 0 0 9px; }
  .share span { margin: 0 5px 0 10px; }

  .ribbon { height: 112px; flex: none; background: #fafafa; display: flex; position: relative; z-index: 2; box-shadow: 0 1px 4px rgba(0, 0, 0, 0.22); }
  .group { height: 110px; border-right: 1px solid #d0cecc; display: flex; flex-direction: column; flex: none; }
  .clip { width: 201px; }
  .items { display: flex; height: 95px; padding-top: 6px; flex: none; }
  .item { display: flex; flex-direction: column; align-items: center; flex: none; line-height: 20px; font-size: 14.5px; letter-spacing: -0.35px; }
  .item > span:first-of-type { margin-top: 3px; }
  .off { color: #c4c2c0; }
  .second { display: flex; align-items: center; gap: 2px; min-height: 20px; }
  .gname { text-align: center; font-size: 12.5px; line-height: 17px; letter-spacing: -0.4px; color: #333; }
  .cliprow { display: flex; height: 95px; padding-top: 6px; flex: none; }
  .paste { width: 36px; margin-left: 17px; }
  .paste svg { margin-left: 5px; }
  .clipcol { margin-left: 12px; color: #c4c2c0; line-height: 30px; font-size: 14.5px; letter-spacing: -0.25px; margin-top: -6px; }
  .clipcol div { display: flex; align-items: center; gap: 5px; }
  .collapse { margin: 98px 0 0 auto; margin-right: 6px; }

  .body { height: 790px; flex: none; display: flex; }
  .rail { width: 51px; border-right: 1px solid #dad8d6; flex: none; }
  .railitem { height: 50px; display: flex; align-items: center; padding: 0 0 2px 15px; }
  .railitem:nth-child(4) { padding: 4px 0 0 13px; }
  .dax { overflow: visible; }
  .active { border-left: 3px solid #117865; padding-left: 13px; }
  .work { width: 1417px; flex: none; display: flex; flex-direction: column; }
  .upper { height: 746px; display: flex; flex: none; }
  .viewport { width: 1166px; background: #fff; overflow: hidden; flex: none; }
  .report { height: 656px; background: #e66c37; box-shadow: 0 2px 14px rgba(0, 0, 0, 0.3); overflow: hidden; }
  .card { border: 1px solid #3c1c0e; border-radius: 26px; flex: none; overflow: hidden; }
  .card > svg { margin: -1px; }
  .r1 { display: flex; height: 205px; padding-left: 21px; }
  .cat { width: 183px; height: 196px; }
  .cat svg { width: 182px; height: 196px; }
  .r1r { display: flex; flex-direction: column; align-items: flex-end; margin-left: 40px; padding-top: 10px; width: 556px; }
  .head { width: 556px; height: 77px; }
  .head svg { width: 556px; height: 77px; }
  .slicer { width: 537px; height: 74px; margin-top: 12px; padding: 13px 0 0 31px; }
  .sname { display: block; margin-left: -11px; font-size: 9.5px; line-height: 12px; letter-spacing: 0; }
  .chips { display: flex; gap: 2px; margin-top: 3px; }
  .chip { width: 93.3px; height: 29px; background: #fff; border: 1px solid #a19f9d; font-size: 12px; letter-spacing: -0.2px; color: #605e5c; display: flex; align-items: center; justify-content: center; }
  .chip.on { background: #333; color: #fff; border-color: #555; }
  .r2 { display: flex; height: 224px; padding-left: 11px; }
  .sales { width: 553px; height: 202px; margin: 2px 38px 0 0; }
  .sales svg { width: 553px; height: 202px; }
  .profit { width: 546px; height: 204px; }
  .profit svg { width: 546px; height: 204px; }
  .r3 { display: flex; padding-left: 21px; }
  .seg { width: 233px; height: 214px; margin: 2px 33px 0 0; }
  .seg svg { width: 233px; height: 214px; }
  .reg { width: 261px; height: 214px; margin: 2px 77px 0 0; }
  .reg svg { width: 261px; height: 214px; }
  .sub { width: 236px; height: 216px; margin-right: 33px; }
  .sub svg { width: 236px; height: 216px; }
  .ship { width: 245px; height: 216px; }
  .ship svg { width: 245px; height: 216px; }
  text { letter-spacing: 0; }
  .vt { font: 600 15.5px Roboto, sans-serif; fill: #252423; }
  .vt.k { fill: #000; }
  .dl { font-size: 11.5px; font-weight: 600; fill: #000; }
  .mo { font-size: 11px; font-weight: 600; fill: #000; }
  .lg { font-size: 12px; fill: #605e5c; }
  .lg.b { font-weight: 700; }
  .big { font-size: 40px; fill: #252423; }
  .lead { fill: none; stroke: #b07050; stroke-width: 1.2; }

  .filters { width: 251px; background: #fff; border-left: 1px solid #b3b0ad; flex: none; letter-spacing: -0.15px; }
  .fhead { display: flex; align-items: center; height: 57px; padding: 2px 12px 9px 14px; }
  .fhead b { font-size: 18px; font-weight: 600; margin: 0 auto 0 9px; letter-spacing: -0.2px; }
  .eye { margin-right: 22px; }
  .fsearch { width: 225px; height: 38px; border: 1px solid #a19f9d; border-radius: 2px; margin-left: 10px; display: flex; align-items: center; padding-left: 13px; gap: 17px; font-size: 15.5px; letter-spacing: -0.3px; }
  .fsec { display: flex; justify-content: space-between; border-top: 1px solid #b3b0ad; margin-top: 5px; padding: 21px 14px 0 10px; height: 53px; line-height: 20px; font-size: 14.5px; }
  .second2 { border: 0; margin-top: 12px; padding-top: 22px; }
  .dots { letter-spacing: 1.2px; }
  .fbox { margin-left: 10px; width: 230px; height: 57px; border: 1px solid #c0bebc; border-radius: 2px; display: flex; align-items: center; justify-content: center; font-size: 14.5px; padding-top: 1px; }

  .pages { height: 44px; display: flex; flex: none; align-items: flex-start; }
  .mode { width: 30px; height: 38px; margin-left: 13px; display: flex; justify-content: center; padding-top: 9px; }
  .mode.on { border-bottom: 3px solid #117865; }
  .phone { margin-left: 24px; padding-top: 6px; }
  .arr { margin: 17px 0 0 20px; }
  .arr2 { margin: 17px 8px 0 22px; }
  .ptab { height: 44px; width: 97px; background: #fff; display: flex; align-items: center; justify-content: center; border-right: 1px solid #d0cecc; font-size: 14.5px; letter-spacing: -0.25px; padding: 1px 0 0 1px; }
  .cur { width: 94px; border-left: 1px solid #979593; border-bottom: 5px solid #117865; padding-top: 6px; }
  .plus { width: 49px; height: 44px; background: #117865; display: flex; align-items: center; justify-content: center; padding-bottom: 3px; }

  .vizpane { width: 227px; border-left: 1px solid #dad8d6; border-right: 1px solid #dad8d6; flex: none; display: flex; flex-direction: column; }
  .phead { display: flex; justify-content: space-between; align-items: center; height: 49px; padding: 0 10px 0 10px; flex: none; }
  .phead b { font-size: 18px; font-weight: 600; letter-spacing: -0.4px; }
  .bv { padding-left: 10px; line-height: 18px; font-size: 14.5px; }
  .modes { display: flex; padding: 4px 0 0 10px; gap: 48px; }
  .build { width: 40px; height: 40px; background: #d2d0ce; border-radius: 3px; display: flex; align-items: center; justify-content: center; }
  .fmt { margin-top: 5px; }
  .notch { margin-top: 6px; }
  .vgrid { display: grid; grid-template-columns: repeat(6, 35px); grid-auto-rows: 35px; padding: 14px 0 0 14px; }
  .vdots { padding-left: 15px; height: 33px; line-height: 9px; letter-spacing: 0; font-weight: 700; }
  .wells { border-top: 1px solid #dad8d6; display: flex; flex-direction: column; font-size: 14.5px; letter-spacing: -0.17px; }
  .lab { padding-left: 15px; line-height: 20px; }
  .values { padding-top: 12px; }
  .well { margin: 6px 0 0 5px; width: 213px; height: 35px; background: #fff; border: 1px dashed #b8b6b4; border-radius: 2px; padding-left: 13px; display: flex; align-items: center; }
  .drill { padding-top: 14px; font-weight: 600; color: #484644; letter-spacing: -0.3px; }
  .trow { display: flex; justify-content: space-between; align-items: center; height: 20px; margin-top: 10px; padding: 0 27px 0 15px; }
  .keep { margin-top: 14px; }
  .two { height: 32px; margin-top: 13px; padding-left: 10px; letter-spacing: -0.08px; }
  .tog { width: 40px; height: 20px; border-radius: 10px; border: 1px solid #7a7876; background: #fff; display: flex; align-items: center; font-size: 11px; padding-left: 5px; gap: 3px; color: #605e5c; letter-spacing: -0.2px; }
  .tog i { width: 10px; height: 10px; border-radius: 50%; background: #605e5c; }
  .tog.on { background: #117865; border-color: #117865; color: #fff; }
  .tog.on i { background: #fff; }

  .data { width: 225px; flex: none; }
  .data .phead { padding: 0 10px 0 10px; }
  .dsearch { margin: 8px 0 0 5px; width: 215px; height: 30px; border: 1px solid #d1d1d1; border-bottom-color: #605e5c; border-radius: 4px; background: #fff; display: flex; align-items: center; padding-left: 15px; gap: 8px; font-size: 16px; letter-spacing: 0; color: #605e5c; }
  .dsearch span { padding-top: 2px; }
  .dlist { margin-top: 9px; height: 694px; display: flex; overflow: hidden; }
  .dfields { width: 210px; flex: none; margin-top: -8px; }
  .field { display: flex; align-items: center; height: 30px; font-size: 14.5px; letter-spacing: -0.14px; color: #3b3a39; }
  .fname { line-height: 14px; }
  .exp { width: 55px; display: flex; padding-left: 38px; }
  .box { width: 15px; height: 15px; border: 1px solid #7a7876; border-radius: 2px; }
  .kind { width: 32px; padding-left: 10px; }
  .sheet { padding-left: 19px; }
  .sheet svg + svg { margin: 0 7px 0 8px; }
  .scroll { width: 10px; height: 620px; background: #c8c6c4; margin-top: 64px; }

  .status { height: 30px; flex: none; border-top: 1px solid #dad8d6; border-bottom: 1px solid #000; display: flex; align-items: center; justify-content: space-between; padding: 2px 22px 0 5px; color: #605e5c; font-size: 14.5px; letter-spacing: -0.12px; }
  .zoom { display: flex; align-items: center; }
  .zoom span { width: 54px; margin-left: 14px; }
</style>
